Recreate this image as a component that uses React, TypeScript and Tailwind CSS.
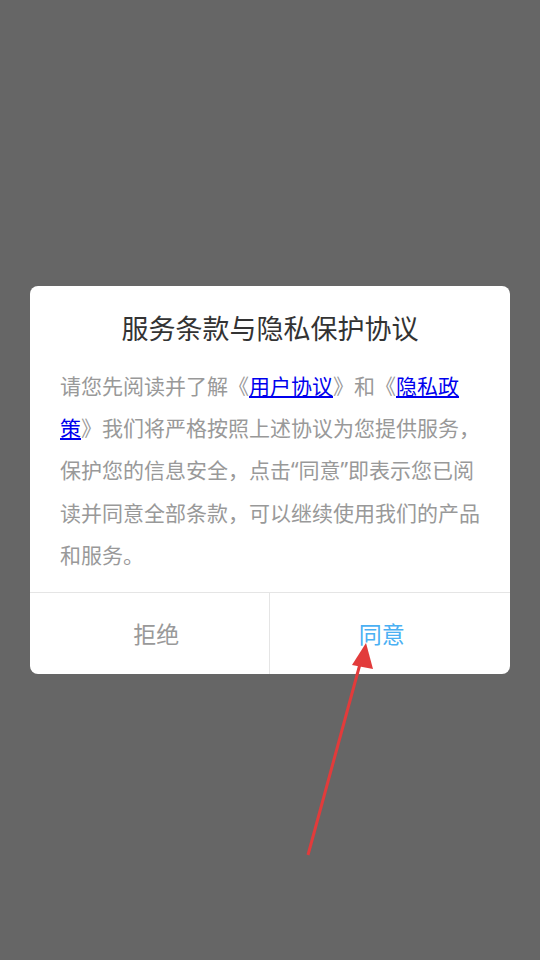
import React from 'react';

const latin = { fontFamily: '"Noto Sans", sans-serif' };

export default function App() {
  return (
    <div
      className="relative flex h-screen w-full items-center justify-center bg-[#666666]"
      style={{ fontFamily: '"Noto Sans CJK SC", "Noto Sans", sans-serif' }}
    >
      <div className="w-[480px] overflow-hidden rounded-lg bg-white">
        <h1 className="pt-[22px] text-center text-[27px] leading-[40px] text-[#333333]">
          服务条款与隐私保护协议
        </h1>
        <p className="px-[30px] pt-[16px] pb-[17px] text-[21px] leading-[42px] text-[#999999]">
          请您先阅读并了解《<a className="text-[#0000ee] underline" href="#">用户协议</a>》和《
          <a className="text-[#0000ee] underline" href="#">隐私政策</a>》我们将严格按照上述协议为您提供服务，保护您的信息安全，点击<span style={latin}>“</span>同意<span style={latin}>”</span>即表示您已阅读并同意全部条款，可以继续使用我们的产品和服务。
        </p>
        <div className="flex h-[82px] border-t border-[#e5e5e5]">
          <button className="flex-1 border-r border-[#e5e5e5] pl-[14px] text-[23px] text-[#999999]">拒绝</button>
          <button className="flex-1 pr-[16px] text-[23px] text-[#4bb0f3]">同意</button>
        </div>
      </div>
      <svg className="pointer-events-none absolute left-0 top-0" width="540" height="960">
        <line x1="308" y1="855" x2="360" y2="664" stroke="#e23b3b" strokeWidth="3" />
        <polygon points="366,643 352,665 373,669" fill="#e23b3b" />
      </svg>
    </div>
  );
}
